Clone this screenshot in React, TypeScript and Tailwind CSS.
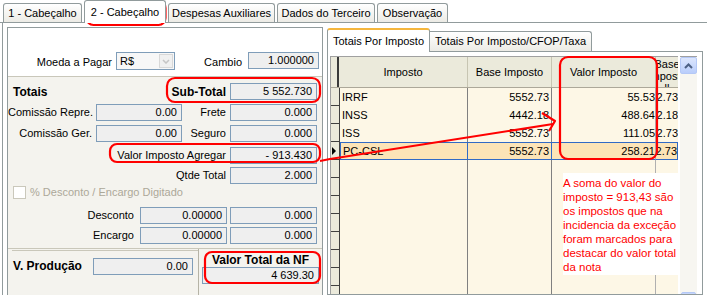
import React from 'react';

const FONT = "font-['Liberation_Sans',Arial,sans-serif]";

function Box({ value, className = '' }: { value?: string; className?: string }) {
  return (
    <div className={`h-[17px] shrink-0 border border-[#7f9db9] bg-[#efefef] flex items-center justify-end pr-[4px] text-[11px] leading-none ${className}`}>
      {value}
    </div>
  );
}

const mainTabs = [
  { label: '1 - Cabeçalho', w: 'w-[79px]' },
  { label: '2 - Cabeçalho', w: 'w-[82px]', active: true },
  { label: 'Despesas Auxiliares', w: 'w-[107px]' },
  { label: 'Dados do Terceiro', w: 'w-[98px]' },
  { label: 'Observação', w: 'w-[71px]' },
];

const rows = [
  { imp: 'IRRF', base: '5552.73', valor: '55.53' },
  { imp: 'INSS', base: '4442.18', valor: '488.64' },
  { imp: 'ISS', base: '5552.73', valor: '111.05' },
  { imp: 'PC-CSL', base: '5552.73', valor: '258.21', sel: true },
];

function MainTabs() {
  return (
    <div className="h-[23px] flex items-end pl-[3px] gap-[2px] border-b border-[#919b9c]">
      {mainTabs.map((t) =>
        t.active ? (
          <div key={t.label} className={`${t.w} h-[23px] -mb-px relative z-10 bg-white border border-b-0 border-[#919b9c] rounded-t-[3px] flex items-center justify-center text-[11px]`}>
            {t.label}
          </div>
        ) : (
          <div key={t.label} className={`${t.w} h-[19px] bg-linear-to-b from-white to-[#ecebe5] border border-b-0 border-[#919b9c] rounded-t-[3px] flex items-center justify-center text-[11px]`}>
            {t.label}
          </div>
        )
      )}
    </div>
  );
}

function LeftPanel() {
  return (
    <div className="w-[316px] h-[270px] shrink-0 border border-[#919b9c] flex flex-col overflow-hidden whitespace-nowrap">
      {/* moeda / cambio */}
      <div className="h-[48px] bg-white flex items-end pb-[6px] text-[11px]">
        <div className="w-[108px] text-right pr-[4px]">Moeda a Pagar</div>
        <div className="w-[59px] h-[18px] border border-[#7f9db9] bg-[#f7f7f7] flex items-center">
          <span className="pl-[3px] flex-1">R$</span>
          <div className="w-[14px] h-[14px] mr-[1px] border border-[#d8d8d8] bg-[#f0f0f0] flex items-center justify-center">
            <svg width="8" height="5" viewBox="0 0 8 5"><path d="M1 1 L4 4 L7 1" stroke="#c5c5c5" strokeWidth="1.5" fill="none" /></svg>
          </div>
        </div>
        <div className="w-[73px] text-right pr-[6px]">Cambio</div>
        <Box value="1.000000" className="w-[71px] h-[16px] mb-[1px]" />
      </div>

      {/* totais */}
      <div className="h-[172px] border-t border-[#c9c7ba] bg-[#f4f3ee] pt-[6px] flex flex-col text-[11px]">
        <div className="flex gap-[4px]">
          <div className="w-[218px] flex items-center justify-between pl-[5px]">
            <span className="font-bold text-[12px]">Totais</span>
            <span className="font-bold text-[12px]">Sub-Total</span>
          </div>
          <Box value="5 552.730" className="w-[87px]" />
        </div>
        <div className="flex items-center mt-[3px]">
          <div className="w-[84px] text-right">Comissão Repre.</div>
          <Box value="0.00" className="w-[86px] ml-[4px]" />
          <div className="w-[44px] text-right">Frete</div>
          <Box value="0.000" className="w-[87px] ml-[4px]" />
        </div>
        <div className="flex items-center mt-[4px]">
          <div className="w-[84px] text-right">Comissão Ger.</div>
          <Box value="0.00" className="w-[86px] ml-[4px]" />
          <div className="w-[44px] text-right">Seguro</div>
          <Box value="0.000" className="w-[87px] ml-[4px]" />
        </div>
        <div className="flex items-center mt-[5px]">
          <div className="w-[218px] text-right">Valor Imposto Agregar</div>
          <Box value="- 913.430" className="w-[87px] ml-[4px]" />
        </div>
        <div className="flex items-center mt-[3px]">
          <div className="w-[218px] text-right">Qtde Total</div>
          <Box value="2.000" className="w-[87px] ml-[4px]" />
        </div>
        <div className="flex items-center mt-[2px] pl-[5px] h-[13px]">
          <div className="w-[13px] h-[13px] border border-[#cac8bb] bg-white" />
          <span className="ml-[4px] text-[#aca899]">% Desconto / Encargo Digitado</span>
        </div>
        <div className="flex items-center mt-[8px]">
          <div className="w-[126px] text-right">Desconto</div>
          <Box value="0.00000" className="w-[87px] ml-[6px]" />
          <Box value="0.000" className="w-[87px] ml-[3px]" />
        </div>
        <div className="flex items-center mt-[3px]">
          <div className="w-[126px] text-right">Encargo</div>
          <Box value="0.00000" className="w-[87px] ml-[6px]" />
          <Box value="0.000" className="w-[87px] ml-[3px]" />
        </div>
      </div>

      {/* producao / total NF */}
      <div className="flex-1 border-t border-[#c9c7ba] bg-[#f4f3ee] flex">
        <div className="w-[191px] border-r border-[#b5b3a6] pt-[1px]">
          <div className="flex items-center border-t border-[#c9c7ba] pt-[6px] ml-[4px]">
            <span className="font-bold text-[12px] w-[81px] pl-[1px]">V. Produção</span>
            <Box value="0.00" className="w-[100px]" />
          </div>
        </div>
        <div className="flex-1 flex flex-col items-center pt-[4px] pl-[3px] pr-[3px]">
          <span className="font-bold text-[12px] leading-[14px]">Valor Total da NF</span>
          <Box value="4 639.30" className="w-full" />
        </div>
      </div>
    </div>
  );
}

function Grid() {
  const empty = Array.from({ length: 8 });
  return (
    <div className="flex">
      <div className="border-l border-t border-[#a0a0a0] bg-[#fdf7e6] flex flex-col">
        {/* header */}
        <div className="h-[31px] flex bg-[#ebeadb] border-b border-[#aca899] text-[11px]">
          <div className="w-[8px] border-r-2 border-[#3a3a3a]" />
          <div className="w-[129px] flex items-center justify-center border-r border-[#c7c5b2]">Imposto</div>
          <div className="w-[84px] flex items-center justify-center border-r border-[#c7c5b2]">Base Imposto</div>
          <div className="w-[104px] flex items-center justify-center border-r border-[#c7c5b2]">Valor Imposto</div>
          <div className="w-[22px] overflow-hidden flex flex-col items-center leading-[12px] pt-[1px]">
            <span className="whitespace-nowrap">Base</span>
            <span className="whitespace-nowrap">Imposto</span>
            <span className="whitespace-nowrap">ll</span>
          </div>
        </div>
        {rows.map((r) => (
          <div key={r.imp} className="h-[18px] flex text-[11px]">
            <div className="w-[9px] bg-[#ebeadb] border-r border-b border-[#404040] flex items-center">
              {r.sel && (
                <svg width="6" height="8" viewBox="0 0 6 8"><path d="M1 0 L5 4 L1 8 Z" fill="#000" /></svg>
              )}
            </div>
            <div className={`w-[128px] flex items-center pl-[2px] border-r ${r.sel ? 'bg-[#fce4b7] border border-[#316ac5]' : 'border-[#808080]'}`}>{r.imp}</div>
            <div className={`w-[84px] flex items-center justify-end pr-[2px] border-r ${r.sel ? 'bg-[#fce4b7] border-y border-[#316ac5]' : 'border-[#808080]'}`}>{r.base}</div>
            <div className={`w-[104px] flex items-center justify-end pr-0 border-r ${r.sel ? 'bg-[#fce4b7] border-y border-[#316ac5] border-r-[#b0b0b0]' : 'border-[#b0b0b0]'}`}>{r.valor}</div>
            <div className={`w-[22px] overflow-hidden flex items-center justify-end ${r.sel ? 'bg-[#fce4b7] border-y border-r border-[#316ac5]' : ''}`}>
              <span className="whitespace-nowrap">{r.base}</span>
            </div>
          </div>
        ))}
        {empty.map((_, i) => (
          <div key={i} className="h-[18px] flex">
            <div className="w-[9px] bg-[#ebeadb] border-r border-b border-[#404040]" />
            <div className="w-[128px] border-r border-[#808080]" />
            <div className="w-[84px] border-r border-[#808080]" />
            <div className="w-[104px] border-r border-[#b0b0b0]" />
            <div className="w-[22px]" />
          </div>
        ))}
      </div>
      {/* scrollbar */}
      <div className="ml-[2px] w-[17px] bg-[#f7f6f1] border-t border-[#a0a0a0] flex flex-col">
        <div className="h-[17px] rounded-[2px] border border-[#b4c8f6] bg-linear-to-b from-[#dce6fd] to-[#b9cdfb] flex items-center justify-center">
          <svg width="9" height="6" viewBox="0 0 9 6"><path d="M1 5 L4.5 1.5 L8 5" stroke="#4d6185" strokeWidth="2" fill="none" /></svg>
        </div>
        <div className="h-[218px]" />
        <div className="h-[12px] mx-[1px] rounded-t-[2px] border border-[#b4c8f6] bg-[#c6d6fb]" />
      </div>
    </div>
  );
}

function RightPanel() {
  return (
    <div className="ml-[4px] flex flex-col w-[376px]">
      <div className="h-[24px] flex items-end">
        <div className="w-[103px] h-[24px] -mb-px relative z-10 bg-white border border-b-0 border-[#919b9c] border-t-2 border-t-[#f5b63c] rounded-t-[3px] flex items-center justify-center text-[11px]">
          Totais Por Imposto
        </div>
        <div className="w-[162px] h-[20px] bg-linear-to-b from-white to-[#ecebe5] border border-b-0 border-l-0 border-[#919b9c] rounded-tr-[3px] flex items-center justify-center text-[11px]">
          Totais Por Imposto/CFOP/Taxa
        </div>
      </div>
      <div className="flex-1 border border-[#919b9c] bg-white pl-[2px] pt-[4px] overflow-hidden">
        <Grid />
      </div>
    </div>
  );
}

export default function App() {
  return (
    <div className={`relative w-[707px] h-[295px] overflow-hidden bg-white text-black ${FONT}`}>
      <MainTabs />
      <div className="h-[272px] ml-[2px] border-l border-[#919b9c] bg-white flex pt-[4px] pl-[4px]">
        <LeftPanel />
        <RightPanel />
      </div>

      {/* annotation note */}
      <div className="absolute left-[563px] top-[173px] w-[117px] h-[102px] bg-white text-[#ff0000] text-[11.5px] leading-[14px] pt-[3px] whitespace-nowrap">
        A soma do valor do<br />
        imposto = 913,43 são<br />
        os impostos que na<br />
        incidencia da exceção<br />
        foram marcados para<br />
        destacar do valor total<br />
        da nota
      </div>

      {/* red highlight marks */}
      <svg className="absolute inset-0 pointer-events-none" width="707" height="295" viewBox="0 0 707 295">
        <g fill="none" stroke="#ff0000" strokeWidth="2.2" strokeLinejoin="round">
          <rect x="86.5" y="1" width="79" height="24" rx="7" />
          <rect x="167" y="78" width="153" height="24" rx="8" />
          <rect x="110" y="144" width="210" height="18" rx="7" />
          <rect x="560" y="57" width="97" height="102" rx="8" />
          <rect x="205" y="252" width="115" height="31" rx="7" />
          <path d="M320 161 L330 159 L553 124" />
          <path d="M542 113 L555 121 L549 131" />
        </g>
      </svg>
    </div>
  );
}
